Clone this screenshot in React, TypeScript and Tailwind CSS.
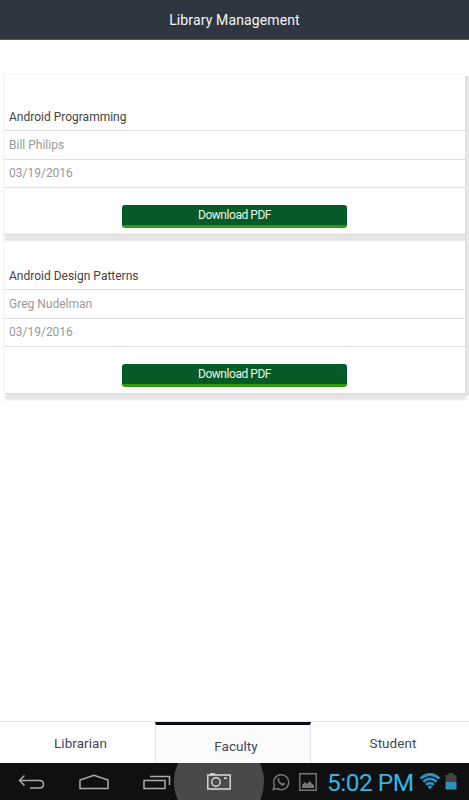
import React from 'react';

interface Book {
  title: string;
  author: string;
  date: string;
}

const books: Book[] = [
  { title: 'Android Programming', author: 'Bill Philips', date: '03/19/2016' },
  { title: 'Android Design Patterns', author: 'Greg Nudelman', date: '03/19/2016' },
];

const BookCard: React.FC<{ book: Book }> = ({ book }) => (
  <div className="relative flex h-[159px] flex-col text-[12px] leading-[18px] shadow-[0_0_1px_#bbb,4px_2px_0_1px_#e5e4e2,1px_7px_2px_#e5e4e2]">
    <div className="h-14 border-b border-[#e2e2e2] px-[5px] pt-[33px] text-[#444]">{book.title}</div>
    <div className="h-[28.5px] border-b border-[#e2e2e2] px-[5px] pt-[5px] text-[#999]">{book.author}</div>
    <div className="h-7 border-b border-[#e2e2e2] px-[5px] pt-[4.5px] text-[#999]">{book.date}</div>
    <button className="mx-auto mt-[17.5px] h-[23px] w-[225px] rounded-[3px] border-b-[3px] border-[#35960f] bg-[#045b27] text-[12px] leading-5 tracking-[-0.45px] text-[#eef5ef]">
      Download PDF
    </button>
  </div>
);

const BackIcon = () => (
  <svg width="28" height="18" viewBox="0 0 28 18" fill="none" stroke="#aaa" strokeWidth="1.5">
    <path d="M6.500 2.500 1.500 7.500 6.500 12.500M1.500 7.500H21.500Q25.500 7.500 25.500 11.300T21.500 15H12" />
  </svg>
);

const HomeIcon = () => (
  <svg width="30" height="18" viewBox="0 0 30 18" fill="none" stroke="#aaa" strokeWidth="1.5">
    <path d="M1 15.500V7L15 2.200 29 7V15.500Z" />
  </svg>
);

const RecentIcon = () => (
  <svg width="28" height="18" viewBox="0 0 28 18" fill="none" stroke="#aaa" strokeWidth="1.5">
    <path d="M1 7.500H22V15.500H1ZM7 3.500H26.500V12" />
  </svg>
);

const CameraIcon = () => (
  <svg width="24" height="18" viewBox="0 0 24 18" fill="none" stroke="#ddd" strokeWidth="1.4">
    <path d="M.8 2H23.200V16H.8ZM3 1H8M17 5.300H20" />
    <circle cx="9" cy="9" r="4.200" />
  </svg>
);

const WhatsAppIcon = () => (
  <svg width="18" height="18" viewBox="0 0 18 18" fill="none" stroke="#777" strokeWidth="1.5">
    <path d="M1.300 16.500 2.500 12.500A7.500 7.500 0 1 1 5.200 15.500Z" />
    <path d="M5.600 5.200Q6.500 4.200 7.200 5.200L7.700 6.500 7.100 7.600Q8.200 9.800 10.300 10.600L11.300 9.700 12.900 10.500Q13 12 11.500 12.500C8.500 12.700 5 9 5.600 5.200Z" fill="#777" stroke="none" />
  </svg>
);

const PictureIcon = () => (
  <svg width="18" height="18" viewBox="0 0 18 18" fill="none" stroke="#777" strokeWidth="1.400">
    <path d="M.8.8H17.200V17.200H.8Z" />
    <path d="M3 15V12L6 9 8 11 11 8 13 11 15 12V15Z" fill="#777" stroke="none" />
  </svg>
);

const WifiIcon = () => (
  <svg width="22" height="17" viewBox="0 0 22 17" fill="none" stroke="#3091b8" strokeWidth="2.700">
    <path d="M1.500 5.500Q11-2.500 20.500 5.500M4.300 8.700Q11 3 17.700 8.700M7 11.800Q11 8.300 15 11.800" />
    <path d="M8.500 13.500Q11 11.500 13.500 13.500L11 16.500Z" fill="#3091b8" stroke="none" />
  </svg>
);

const BatteryIcon = () => (
  <svg width="12" height="17" viewBox="0 0 12 17">
    <path d="M.5 2H3.500V0H8.500V2H11.500V9H.5Z" fill="#444" />
    <path d="M.5 9H11.500V16.500H.5Z" fill="#3091b8" />
  </svg>
);

export default function App() {
  return (
    <div className="flex h-[800px] w-[469px] flex-col overflow-hidden bg-white font-['Roboto',sans-serif]">
      <header className="h-10 border-b border-[#555b66] bg-[#2f3541] text-center text-[14px] leading-10 tracking-[0.13px] text-[#f4f5f6]">
        Library Management
      </header>

      <main className="flex-1 pt-[35px] pr-1 pl-1">
        {books.map((book) => (
          <BookCard key={book.title} book={book} />
        ))}
      </main>

      <nav className="flex h-[42px] border-t border-[#e5e5e5] text-[13.5px] tracking-[0.05px] text-[#414855]">
        <button className="w-[155px] pt-0.5 pl-1.5">Librarian</button>
        <button className="w-[156px] border-x border-t-[3px] border-x-[#e5e5e5] border-t-[#0a0b18] bg-[#fbfbfb] pt-[5px] pl-1.5">
          Faculty
        </button>
        <button className="flex-1 pt-0.5 pl-1.5">Student</button>
      </nav>

      <footer className="flex h-[37px] items-center overflow-hidden bg-[#101010]">
        <div className="ml-[18px]"><BackIcon /></div>
        <div className="ml-[33px]"><HomeIcon /></div>
        <div className="ml-[34px]"><RecentIcon /></div>
        <div className="ml-[3px] flex h-[90px] w-[90px] shrink-0 items-center justify-center rounded-full bg-[#484948]">
          <CameraIcon />
        </div>
        <div className="ml-2"><WhatsAppIcon /></div>
        <div className="ml-[9px]"><PictureIcon /></div>
        <div className="ml-2.5 w-[92px] pt-0.5 text-[24.5px] leading-[35px] tracking-[-0.5px] whitespace-nowrap text-[#33b5e5]">5:02 PM</div>
        <WifiIcon />
        <div className="ml-1"><BatteryIcon /></div>
      </footer>
    </div>
  );
}
